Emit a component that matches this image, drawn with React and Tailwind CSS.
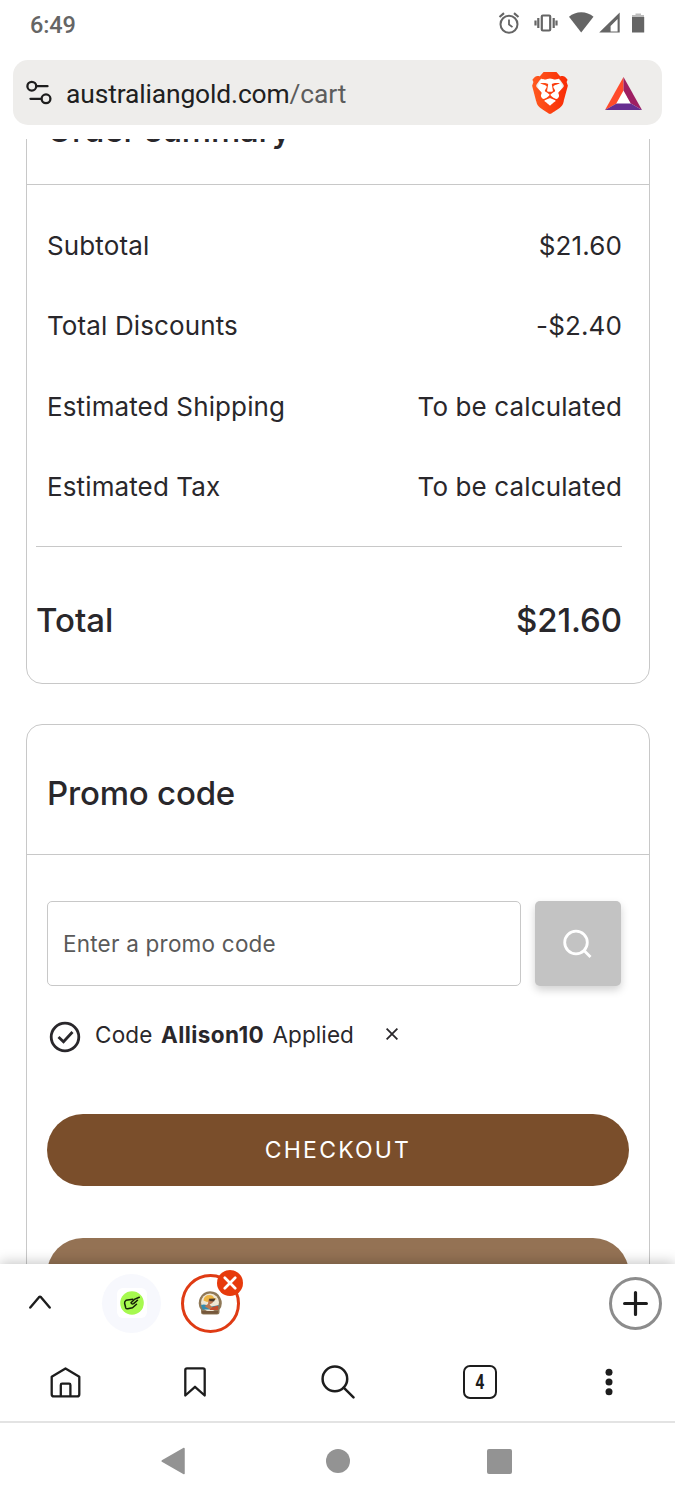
import { SiBrave } from 'react-icons/si';

const summaryRows = [
    { label: 'Subtotal', value: '$21.60' },
    { label: 'Total Discounts', value: '-$2.40' },
    { label: 'Estimated Shipping', value: 'To be calculated' },
    { label: 'Estimated Tax', value: 'To be calculated' },
];

function StatusBar() {
    return (
        <div className="h-[60px] shrink-0 flex items-start justify-between pl-[30px] pr-[30px] pt-[11px] text-[#656565]">
            <span className="text-[23.5px] leading-[28px] font-medium tracking-[-0.1px] font-[Roboto,sans-serif]">6:49</span>
            <svg width="148" height="24" viewBox="497 11 148 24" className="block" fill="none" stroke="currentColor">
                {/* alarm */}
                <circle cx="509" cy="24.3" r="8.5" strokeWidth="2" />
                <path d="M509 19.5v5l3.5 2.6" strokeWidth="1.8" />
                <path d="M499.5 17l4.5-3.8M518.5 17l-4.5-3.8" strokeWidth="2.2" />
                {/* vibrate */}
                <rect x="541.8" y="15.5" width="8.4" height="15" rx="1" strokeWidth="2.2" />
                <path d="M538.3 18v10M553.7 18v10M535.5 20.5v5M556.5 20.5v5" strokeWidth="2.2" />
                {/* wifi */}
                <path d="M569 16.8a18.5 18.5 0 0 1 24.5 0L581.2 32.5z" fill="currentColor" stroke="none" />
                {/* signal */}
                <path d="M619.7 12.5v20h-20.5zM617.6 19l-7 7v5.5h7z" fill="currentColor" fillRule="evenodd" stroke="none" />
                {/* battery */}
                <path d="M635.5 13.5h5.5v1.500h3v3h-12v-3h3.500z" fill="#bdbdbd" stroke="none" />
                <path d="M632 17h12.200v15.500H632z" fill="currentColor" stroke="none" />
            </svg>
        </div>
    );
}

function BraveLogo() {
    return (
        <svg width="36" height="42" viewBox="1.7 0 20.6 24" preserveAspectRatio="none" className="block">
            <defs>
                <linearGradient id="brave" gradientUnits="userSpaceOnUse" x1="2" y1="0" x2="22" y2="0">
                    <stop offset="0" stopColor="#ff5a1f" />
                    <stop offset="1" stopColor="#f92b05" />
                </linearGradient>
            </defs>
            <path d="M7 4h10l2 4-2.5 8-4.5 4-4.5-4L5 8z" fill="#fff" />
            <SiBrave size={24} fill="url(#brave)" stroke="none" />
        </svg>
    );
}

function AddressBar() {
    return (
        <div className="mx-[13px] h-[65px] shrink-0 bg-[#eeedeb] rounded-[15px] flex items-center pl-[13px] pr-[20px]">
            <svg width="26" height="26" viewBox="0 0 26 26" fill="none" stroke="#1d1d1d" strokeWidth="2.3" strokeLinecap="round">
                <circle cx="5.8" cy="6.2" r="4.4" />
                <path d="M11 6.2h10.5M4.5 18.8h10" />
                <circle cx="20" cy="18.8" r="4.4" />
            </svg>
            <span className="ml-[14px] mt-[2px] flex-1 text-[26.4px] leading-[32px] tracking-[-0.13px] text-[#202020] font-[Roboto,sans-serif]">
                australiangold.com<span className="text-[#5c5c5c]">/cart</span>
            </span>
            <BraveLogo />
            <svg width="37" height="33" viewBox="0 0 37 33" className="ml-[37px] mt-px">
                <path d="M18.5 0 0 33l12.5-7 6-11z" fill="#ff4b2b" />
                <path d="M18.5 0 37 33l-12-7-6.5-11z" fill="#9e1f63" />
                <path d="M0 33h37l-12-7H12.5z" fill="#662d91" />
                <path d="M18.5 13.5 25.7 26.5H11.3z" fill="#fff" />
            </svg>
        </div>
    );
}

function OrderSummary() {
    return (
        <section className="mt-[-86px] h-[631px] border border-[#c8c8c8] rounded-[16px]">
            <div className="h-[131px] border-b border-[#c8c8c8] flex items-end pl-[20px] pb-[34px]">
                <h2 className="text-[33px] leading-[40px] font-medium tracking-[-0.2px]">Order summary</h2>
            </div>
            <div className="pt-[21px] pl-[20px] pr-[27px] text-[26px] leading-[32px] tracking-[0.12px]">
                {summaryRows.map((row) => (
                    <div key={row.label} className="h-[80.25px] flex items-center justify-between">
                        <span>{row.label}</span>
                        <span>{row.value}</span>
                    </div>
                ))}
            </div>
            <div className="mt-[19px] ml-[9px] mr-[27px] border-t border-[#c8c8c8] pt-[53px] flex items-start justify-between text-[33px] leading-[40px] font-medium">
                <span>Total</span>
                <span className="tracking-[-0.1px]">$21.60</span>
            </div>
        </section>
    );
}

function PromoCode() {
    return (
        <section className="mt-[40px] border border-[#c8c8c8] rounded-[16px] h-[700px]">
            <div className="h-[130px] border-b border-[#c8c8c8] pl-[20px] pt-[48px]">
                <h2 className="text-[33px] leading-[40px] font-medium tracking-[-0.2px]">Promo code</h2>
            </div>
            <div className="pl-[20px] pt-[46px]">
                <div className="flex gap-[14px]">
                    <input
                        type="text"
                        placeholder="Enter a promo code"
                        className="w-[474px] h-[85px] border border-[#c8c8c8] rounded-[5px] px-[15px] pb-px text-[22.5px] tracking-[0.22px] placeholder:text-[#5a5a5a] outline-none"
                    />
                    <button className="w-[86px] h-[85px] bg-[#c3c3c3] rounded-[5px] shadow-[0_4px_9px_rgba(0,0,0,0.18)] flex items-center justify-center">
                        <svg width="30" height="30" viewBox="0 0 30 30" fill="none" stroke="#fff" strokeWidth="2.8">
                            <circle cx="13" cy="13.5" r="11.3" />
                            <path d="M21 21.5l6.5 6.5" />
                        </svg>
                    </button>
                </div>
                <div className="mt-[32px] h-[34px] flex items-center text-[22.5px] leading-[34px] tracking-[0.2px]">
                    <svg width="32" height="32" viewBox="0 0 32 32" fill="none" stroke="#29272b" strokeWidth="2.8" className="ml-[2px] mt-[3px]">
                        <circle cx="16" cy="16" r="13.8" />
                        <path d="M9.5 16l5 4.800L23.500 11" />
                    </svg>
                    <span className="ml-[14px] w-[259px] flex items-baseline">
                        <span className="w-[66px]">Code </span>
                        <b className="font-bold tracking-[0.4px]">Allison10</b>
                        <span className="ml-auto tracking-[0.1px]"> Applied</span>
                    </span>
                    <svg width="12" height="12" viewBox="0 0 12 12" stroke="#29272b" strokeWidth="1.8" className="ml-[32px] mb-[2px]">
                        <path d="M.6.6l10.8 10.8M11.4.6L.6 11.4" />
                    </svg>
                </div>
                <button className="mt-[62px] w-[582px] h-[72px] rounded-full bg-[#7a4e2b] text-white text-[23px] tracking-[2.2px] flex items-center justify-center">
                    CHECKOUT
                </button>
                <div className="mt-[52px] w-[582px] h-[72px] rounded-full bg-[#947254]" />
            </div>
        </section>
    );
}

function TabStrip() {
    return (
        <div className="h-[78px] flex items-center pl-[29px] pr-[13px]">
            <svg width="22" height="14" viewBox="0 0 22 14" fill="none" stroke="#1d1d1d" strokeWidth="2.4" strokeLinecap="round" strokeLinejoin="round" className="mb-[3px]">
                <path d="M1.3 12.500L10 2.200q1-1 2 0l8.700 10.300" />
            </svg>
            <div className="ml-[51px] w-[59px] h-[59px] rounded-full bg-[#f7f8fd] flex items-center justify-center">
                <div className="w-[30px] h-[30px] rounded-[6px] bg-white flex items-center justify-center">
                    <svg width="24" height="24" viewBox="0 0 24 24" fill="none" stroke="#142008" strokeWidth="1.5" strokeLinecap="round" strokeLinejoin="round">
                        <circle cx="12" cy="12" r="11.8" fill="#a6f94f" stroke="none" />
                        <path d="M12.8 8.2L6 9.300Q4.300 10.500 4.600 12.300l1.200 4.700q.5 1.100 1.900.8l4.800-1 4-3.600" />
                        <path d="M19.300 6.200l-5 2.200-3.300 3.400q.8 1.800 2.600.8l3.900-3.400" />
                    </svg>
                </div>
            </div>
            <div className="ml-[20px] relative w-[59px] h-[59px] rounded-full border-[3px] border-[#df3b14] flex items-center justify-center">
                <svg width="24" height="24" viewBox="0 0 24 24" className="mr-px">
                    <path d="M12 .3a11.700 11.700 0 0 1 9.500 18.500V21q0 2.500-2.500 2.500H5.500Q3 23.500 3 21v-2.200A11.700 11.700 0 0 1 12 .3z" fill="#8f7857" />
                    <circle cx="12" cy="11.5" r="9" fill="#efe6d4" />
                    <path d="M3 14q5-1.500 8 2l10-2-1.500 4.500H4.500z" fill="#328cb0" />
                    <path d="M12 16.500l8.500-2-.5 4.500h-8z" fill="#c34b2d" />
                    <path d="M5.500 9.500q.5-5.500 6-5.500 3.500 0 4.500 3l3 1-4 1.500-6 1.500z" fill="#edb544" />
                    <path d="M10.500 8.500l5 .5-1 3-3 1.500 3 3-3 1.800-5-3 3.500-2.300z" fill="#bd7750" />
                    <path d="M11 7.800l6.500-.2-1.500 3-4.500-.6z" fill="#49372a" />
                    <path d="M4 20h16v1.500q0 1.300-1.300 1.300H5.500Q4 22.800 4 21.300z" fill="#76583c" />
                </svg>
                <span className="absolute -top-[7px] -right-[6px] w-[26px] h-[26px] rounded-full bg-[#e73a0c] flex items-center justify-center">
                    <svg width="14" height="14" viewBox="0 0 14 14" stroke="#fff" strokeWidth="2.7" strokeLinecap="round">
                        <path d="M1.8 1.8l10.4 10.4M12.2 1.8L1.8 12.2" />
                    </svg>
                </span>
            </div>
            <div className="ml-auto w-[53px] h-[53px] rounded-full border-[3px] border-[#8c8c8c] flex items-center justify-center">
                <svg width="25" height="25" viewBox="0 0 25 25" stroke="#1d1d1d" strokeWidth="3.2" strokeLinecap="round">
                    <path d="M12.5 1.6v21.8M1.6 12.5h21.8" />
                </svg>
            </div>
        </div>
    );
}

function BrowserNav() {
    return (
        <div className="h-[81px] border-b-2 border-[#e3e3e3] flex items-center pl-[50px] pt-px text-[#1d1d1d]">
            <svg width="31" height="31" viewBox="0 0 31 31" fill="none" stroke="currentColor" strokeWidth="2.3" strokeLinejoin="round">
                <path d="M1.7 9.8L15.5 1.5l13.8 8.3v17.400q0 2.200-2.200 2.200H3.900q-2.200 0-2.200-2.200z" />
                <path d="M10.8 29V18q0-1.3 1.3-1.3h7q1.3 0 1.3 1.3v11" />
            </svg>
            <svg width="22" height="30" viewBox="0 0 22 30" fill="none" stroke="currentColor" strokeWidth="2.3" strokeLinejoin="round" className="ml-[103px]">
                <path d="M1.3 3q0-1.7 1.7-1.7h16q1.7 0 1.7 1.7v25.500L11 19.800 1.300 28.500z" />
            </svg>
            <svg width="34" height="34" viewBox="0 0 34 34" fill="none" stroke="currentColor" strokeWidth="2.5" strokeLinecap="round" className="ml-[115px]">
                <circle cx="13.9" cy="13.9" r="12.3" />
                <path d="M22.7 22.7l9.8 9.6" />
            </svg>
            <span className="ml-[108px] w-[34px] h-[34px] border-[2.5px] border-[#1d1d1d] rounded-[7px] flex items-center justify-center text-[20px] leading-none font-bold font-[Roboto,sans-serif]">
                <span className="scale-x-[0.8]">4</span>
            </span>
            <svg width="8" height="28" viewBox="0 0 8 28" fill="currentColor" className="ml-[108px]">
                <circle cx="4" cy="4.2" r="3.5" />
                <circle cx="4" cy="14" r="3.5" />
                <circle cx="4" cy="23.8" r="3.5" />
            </svg>
        </div>
    );
}

function SystemNav() {
    return (
        <div className="h-[77px] flex items-center pl-[161px] pb-px text-[#939393]">
            <svg width="24" height="28" viewBox="0 0 24 28" fill="currentColor" stroke="currentColor" strokeWidth="1.5" strokeLinejoin="round">
                <path d="M23 1.5v25L1.2 14z" />
            </svg>
            <span className="ml-[141px] w-[24px] h-[24px] rounded-full bg-[#939393]" />
            <span className="ml-[137px] w-[25px] h-[25px] rounded-[2px] bg-[#939393]" />
        </div>
    );
}

export default function App() {
    return (
        <div className="w-[675px] h-[1500px] flex flex-col bg-white overflow-hidden text-[#29272b] font-[Inter,sans-serif]">
            <StatusBar />
            <AddressBar />
            <main className="mt-[14px] h-[1125px] shrink-0 overflow-hidden pl-[26px] pr-[25px]">
                <OrderSummary />
                <PromoCode />
            </main>
            <footer className="relative shrink-0 bg-white shadow-[0_-2px_12px_rgba(0,0,0,0.22)]">
                <TabStrip />
                <BrowserNav />
                <SystemNav />
            </footer>
        </div>
    );
}
